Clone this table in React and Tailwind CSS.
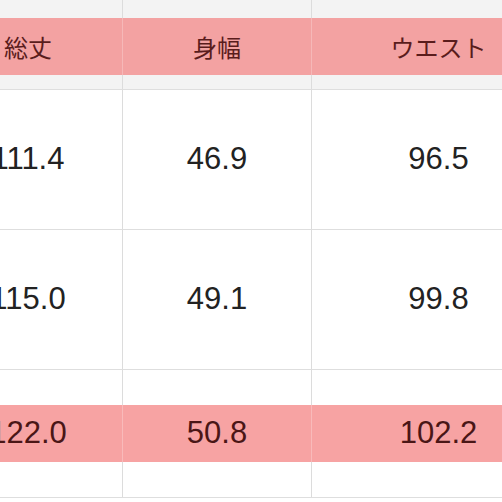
import React from "react";

const cols = ["w-[189px]", "w-[189px]", "w-[254px]"];
const header = ["総丈", "身幅", "ウエスト"];
const rows = [
  ["111.4", "46.9", "96.5"],
  ["115.0", "49.1", "99.8"],
];
const last = ["122.0", "50.8", "102.2"];

const jp = { fontFamily: '"Noto Sans CJK JP", "Noto Sans", sans-serif' };
const num = { fontFamily: '"Liberation Sans", Arial, sans-serif' };

export default function App() {
  return (
    <div className="w-[502px] h-[502px] overflow-hidden bg-white">
      <div className="ml-[-66px] w-[640px] flex flex-col">
        {/* header */}
        <div className="flex h-[90px] border-b border-[#dedede] bg-[#f3f3f3]">
          {header.map((h, i) => (
            <div
              key={i}
              className={`${cols[i]} shrink-0 border-r border-[#dcdcdc] pt-[18px]`}
            >
              <div
                className="relative z-10 -mr-px border-r border-[#f6b8b8] h-[57px] bg-[#f3a2a2] flex items-center justify-center text-[24px] text-[#5a1c1c]"
                style={jp}
              >
                {h}
              </div>
            </div>
          ))}
        </div>
        {rows.map((r, ri) => (
          <div key={ri} className="flex h-[140px] border-b border-[#dedede]">
            {r.map((v, i) => (
              <div
                key={i}
                className={`${cols[i]} shrink-0 border-r border-[#dcdcdc] flex items-center justify-center text-[31px] text-[#222222]`}
                style={num}
              >
                {v}
              </div>
            ))}
          </div>
        ))}
        <div className="flex h-[128px] border-b border-[#dedede]">
          {last.map((v, i) => (
            <div
              key={i}
              className={`${cols[i]} shrink-0 border-r border-[#dcdcdc] pt-[35px]`}
            >
              <div
                className="relative z-10 -mr-px border-r border-[#f9baba] h-[57px] bg-[#f7a3a3] flex items-center justify-center text-[31px] text-[#4a1616]"
                style={num}
              >
                {v}
              </div>
            </div>
          ))}
        </div>
      </div>
    </div>
  );
}
